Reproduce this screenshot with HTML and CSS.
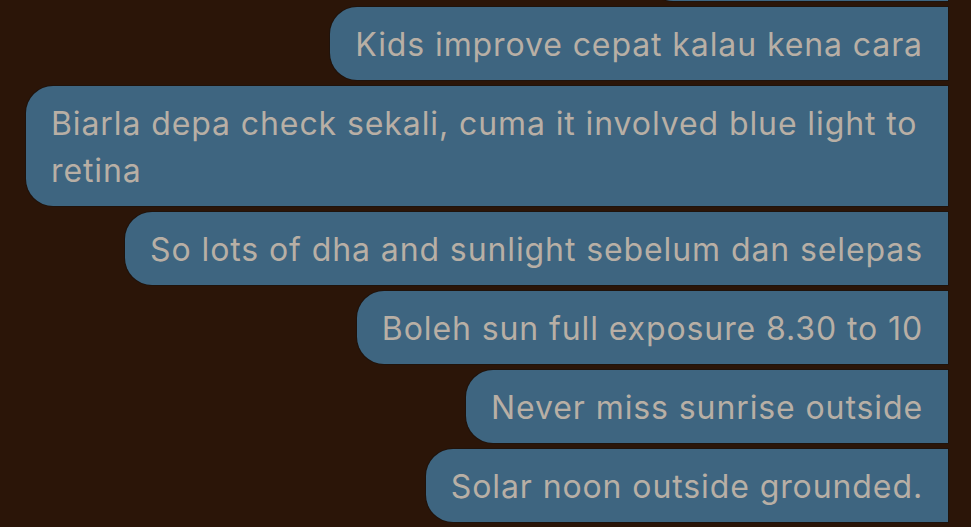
FILE: index.html
```html
<!DOCTYPE html>
<html lang="ms">
<head>
<meta charset="utf-8">
<title>Messages</title>
<link rel="stylesheet" href="styles.css">
</head>
<body>
<main class="thread">
  <div class="bubble bubble-clipped" aria-hidden="true"></div>
  <div class="bubble">Kids improve cepat kalau kena cara</div>
  <div class="bubble">Biarla depa check sekali, cuma it involved blue light to retina</div>
  <div class="bubble">So lots of dha and sunlight sebelum dan selepas</div>
  <div class="bubble">Boleh sun full exposure 8.30 to 10</div>
  <div class="bubble">Never miss sunrise outside</div>
  <div class="bubble">Solar noon outside grounded.</div>
</main>
</body>
</html>
```
FILE: styles.css
```css
html, body {
  margin: 0;
  padding: 0;
  background: #2b1508;
  height: 100%;
  overflow: hidden;
}

.thread {
  display: flex;
  flex-direction: column;
  align-items: flex-end;
  gap: 6px;
  padding-right: 23px;
}

.bubble {
  box-sizing: border-box;
  max-width: 922px;
  padding: 14px 25px 12px 25px;
  background: #3e6580;
  color: #b8afa5;
  font-family: Inter, "Noto Sans", sans-serif;
  font-size: 32px;
  letter-spacing: 0.9px;
  line-height: 47px;
  border-radius: 27px 0 0 27px;
  box-shadow: 0 0 0 1px rgba(18, 18, 18, 0.45);
}

.bubble-clipped {
  width: 302px;
  height: 73px;
  margin-top: -72px;
}
```
